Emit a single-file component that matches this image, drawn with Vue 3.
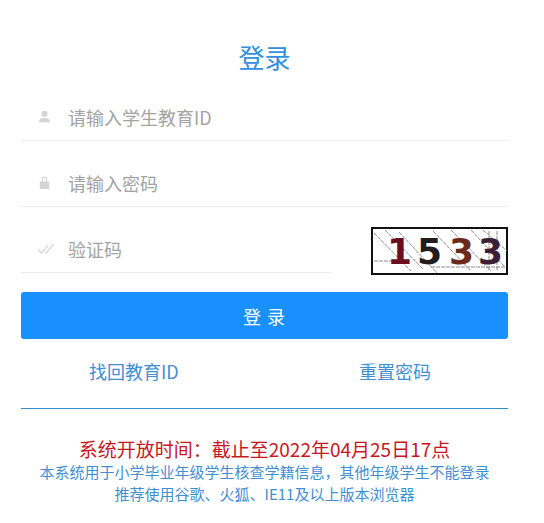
<script setup>
const noise = [
  'M3 6 L40 44', 'M14 3 L52 42', 'M28 5 L66 46', 'M62 4 L100 44', 'M80 3 L120 44', 'M100 3 L134 40',
  'M112 3 L136 24', 'M3 34 L30 34', 'M60 40 L134 40', 'M118 4 L118 44', 'M126 4 L126 44'
]
const digits = [
  { text: '1', x: 16, color: '#6d0d22' },
  { text: '5', x: 46, color: '#221c1c' },
  { text: '3', x: 78, color: '#6a2a1c' },
  { text: '3', x: 107, color: '#3c2038' }
]
</script>

<template>
  <main class="login">
    <h1 class="title">登录</h1>

    <div class="field">
      <svg class="icon" viewBox="0 0 16 16" aria-hidden="true">
        <circle cx="8" cy="5" r="3.2" />
        <path d="M2 14 C2 10.6 5 9.6 8 9.6 C11 9.6 14 10.6 14 14 Z" />
      </svg>
      <span class="placeholder">请输入学生教育ID</span>
    </div>

    <div class="field">
      <svg class="icon" viewBox="0 0 16 16" aria-hidden="true">
        <path d="M3 7 H13 V15 H3 Z M5 7 V4.6 C5 2.8 6.3 1.6 8 1.6 C9.7 1.6 11 2.8 11 4.6 V7 H9.8 V4.6 C9.8 3.6 9 2.9 8 2.9 C7 2.9 6.2 3.6 6.2 4.6 V7 Z" />
      </svg>
      <span class="placeholder">请输入密码</span>
    </div>

    <div class="captcha-row">
      <div class="field captcha-field">
        <svg class="icon check" viewBox="0 0 18 12" aria-hidden="true">
          <path d="M1 7 L4.5 10.5 L11 3" />
          <path d="M8 9.5 L9 10.5 L16.5 2" />
        </svg>
        <span class="placeholder">验证码</span>
      </div>
      <svg class="captcha" viewBox="0 0 137 48" role="img" aria-label="验证码图片">
        <rect x="1" y="1" width="135" height="46" fill="#fff" stroke="#111" stroke-width="2" />
        <path v-for="(line, i) in noise" :key="i" :d="line" class="noise" />
        <text
          v-for="(digit, i) in digits"
          :key="i"
          :x="digit.x"
          y="37"
          :fill="digit.color"
          class="digit"
        >{{ digit.text }}</text>
      </svg>
    </div>

    <button class="submit" type="button">登 录</button>

    <nav class="links">
      <a>找回教育ID</a>
      <a>重置密码</a>
    </nav>

    <footer class="notes">
      <p class="open-time">系统开放时间：截止至2022年04月25日17点</p>
      <p class="note">本系统用于小学毕业年级学生核查学籍信息，其他年级学生不能登录</p>
      <p class="note">推荐使用谷歌、火狐、IE11及以上版本浏览器</p>
    </footer>
  </main>
</template>

<style scoped>
.login {
  box-sizing: border-box;
  width: 544px;
  height: 523px;
  padding: 0 36px 0 21px;
  background: #fff;
  font-family: "Noto Sans CJK SC", "Noto Sans", sans-serif;
  overflow: hidden;
}
.title {
  margin: 0;
  padding-top: 39px;
  height: 75px;
  box-sizing: content-box;
  height: 36px;
  line-height: 36px;
  font-size: 26px;
  font-weight: 400;
  text-align: center;
  color: #2f8fe0;
}
.field {
  display: flex;
  align-items: center;
  box-sizing: border-box;
  height: 66px;
  padding: 18px 0 0 16px;
  border-bottom: 1px solid #ececec;
}
.icon {
  width: 15px;
  height: 15px;
  margin-right: 16px;
  fill: #d4d4d4;
  flex: none;
}
.check {
  fill: none;
  stroke: #d8d8d8;
  stroke-width: 1.4;
  width: 18px;
  margin-right: 13px;
}
.placeholder {
  font-size: 18px;
  color: #a3a3a3;
}
.captcha-row {
  display: flex;
  align-items: flex-end;
  justify-content: space-between;
}
.captcha-field {
  width: 311px;
}
.captcha {
  width: 137px;
  height: 48px;
  margin-bottom: -2px;
  display: block;
}
.noise {
  stroke: #8c8c8c;
  stroke-width: 1;
  stroke-dasharray: 4 1;
  fill: none;
}
.digit {
  font-family: "DejaVu Sans", sans-serif;
  font-size: 36px;
  font-weight: 700;
}
.submit {
  display: block;
  width: 100%;
  height: 47px;
  margin-top: 19px;
  border: 0;
  border-radius: 3px;
  background: #1890ff;
  color: #fff;
  font-family: inherit;
  font-size: 18px;
  letter-spacing: 1px;
  padding: 0;
}
.links {
  display: flex;
  justify-content: space-between;
  height: 70px;
  padding: 19px 77px 0 68px;
  box-sizing: border-box;
  border-bottom: 1px solid #2f8fd0;
  font-size: 18px;
  line-height: 26px;
  color: #3f8fd2;
}
.notes {
  padding-top: 28px;
  text-align: center;
}
.notes p {
  margin: 0;
}
.open-time {
  font-size: 19px;
  line-height: 24px;
  color: #c8161d;
}
.note {
  font-size: 15px;
  line-height: 22px;
  color: #3f8fd2;
}
</style>
